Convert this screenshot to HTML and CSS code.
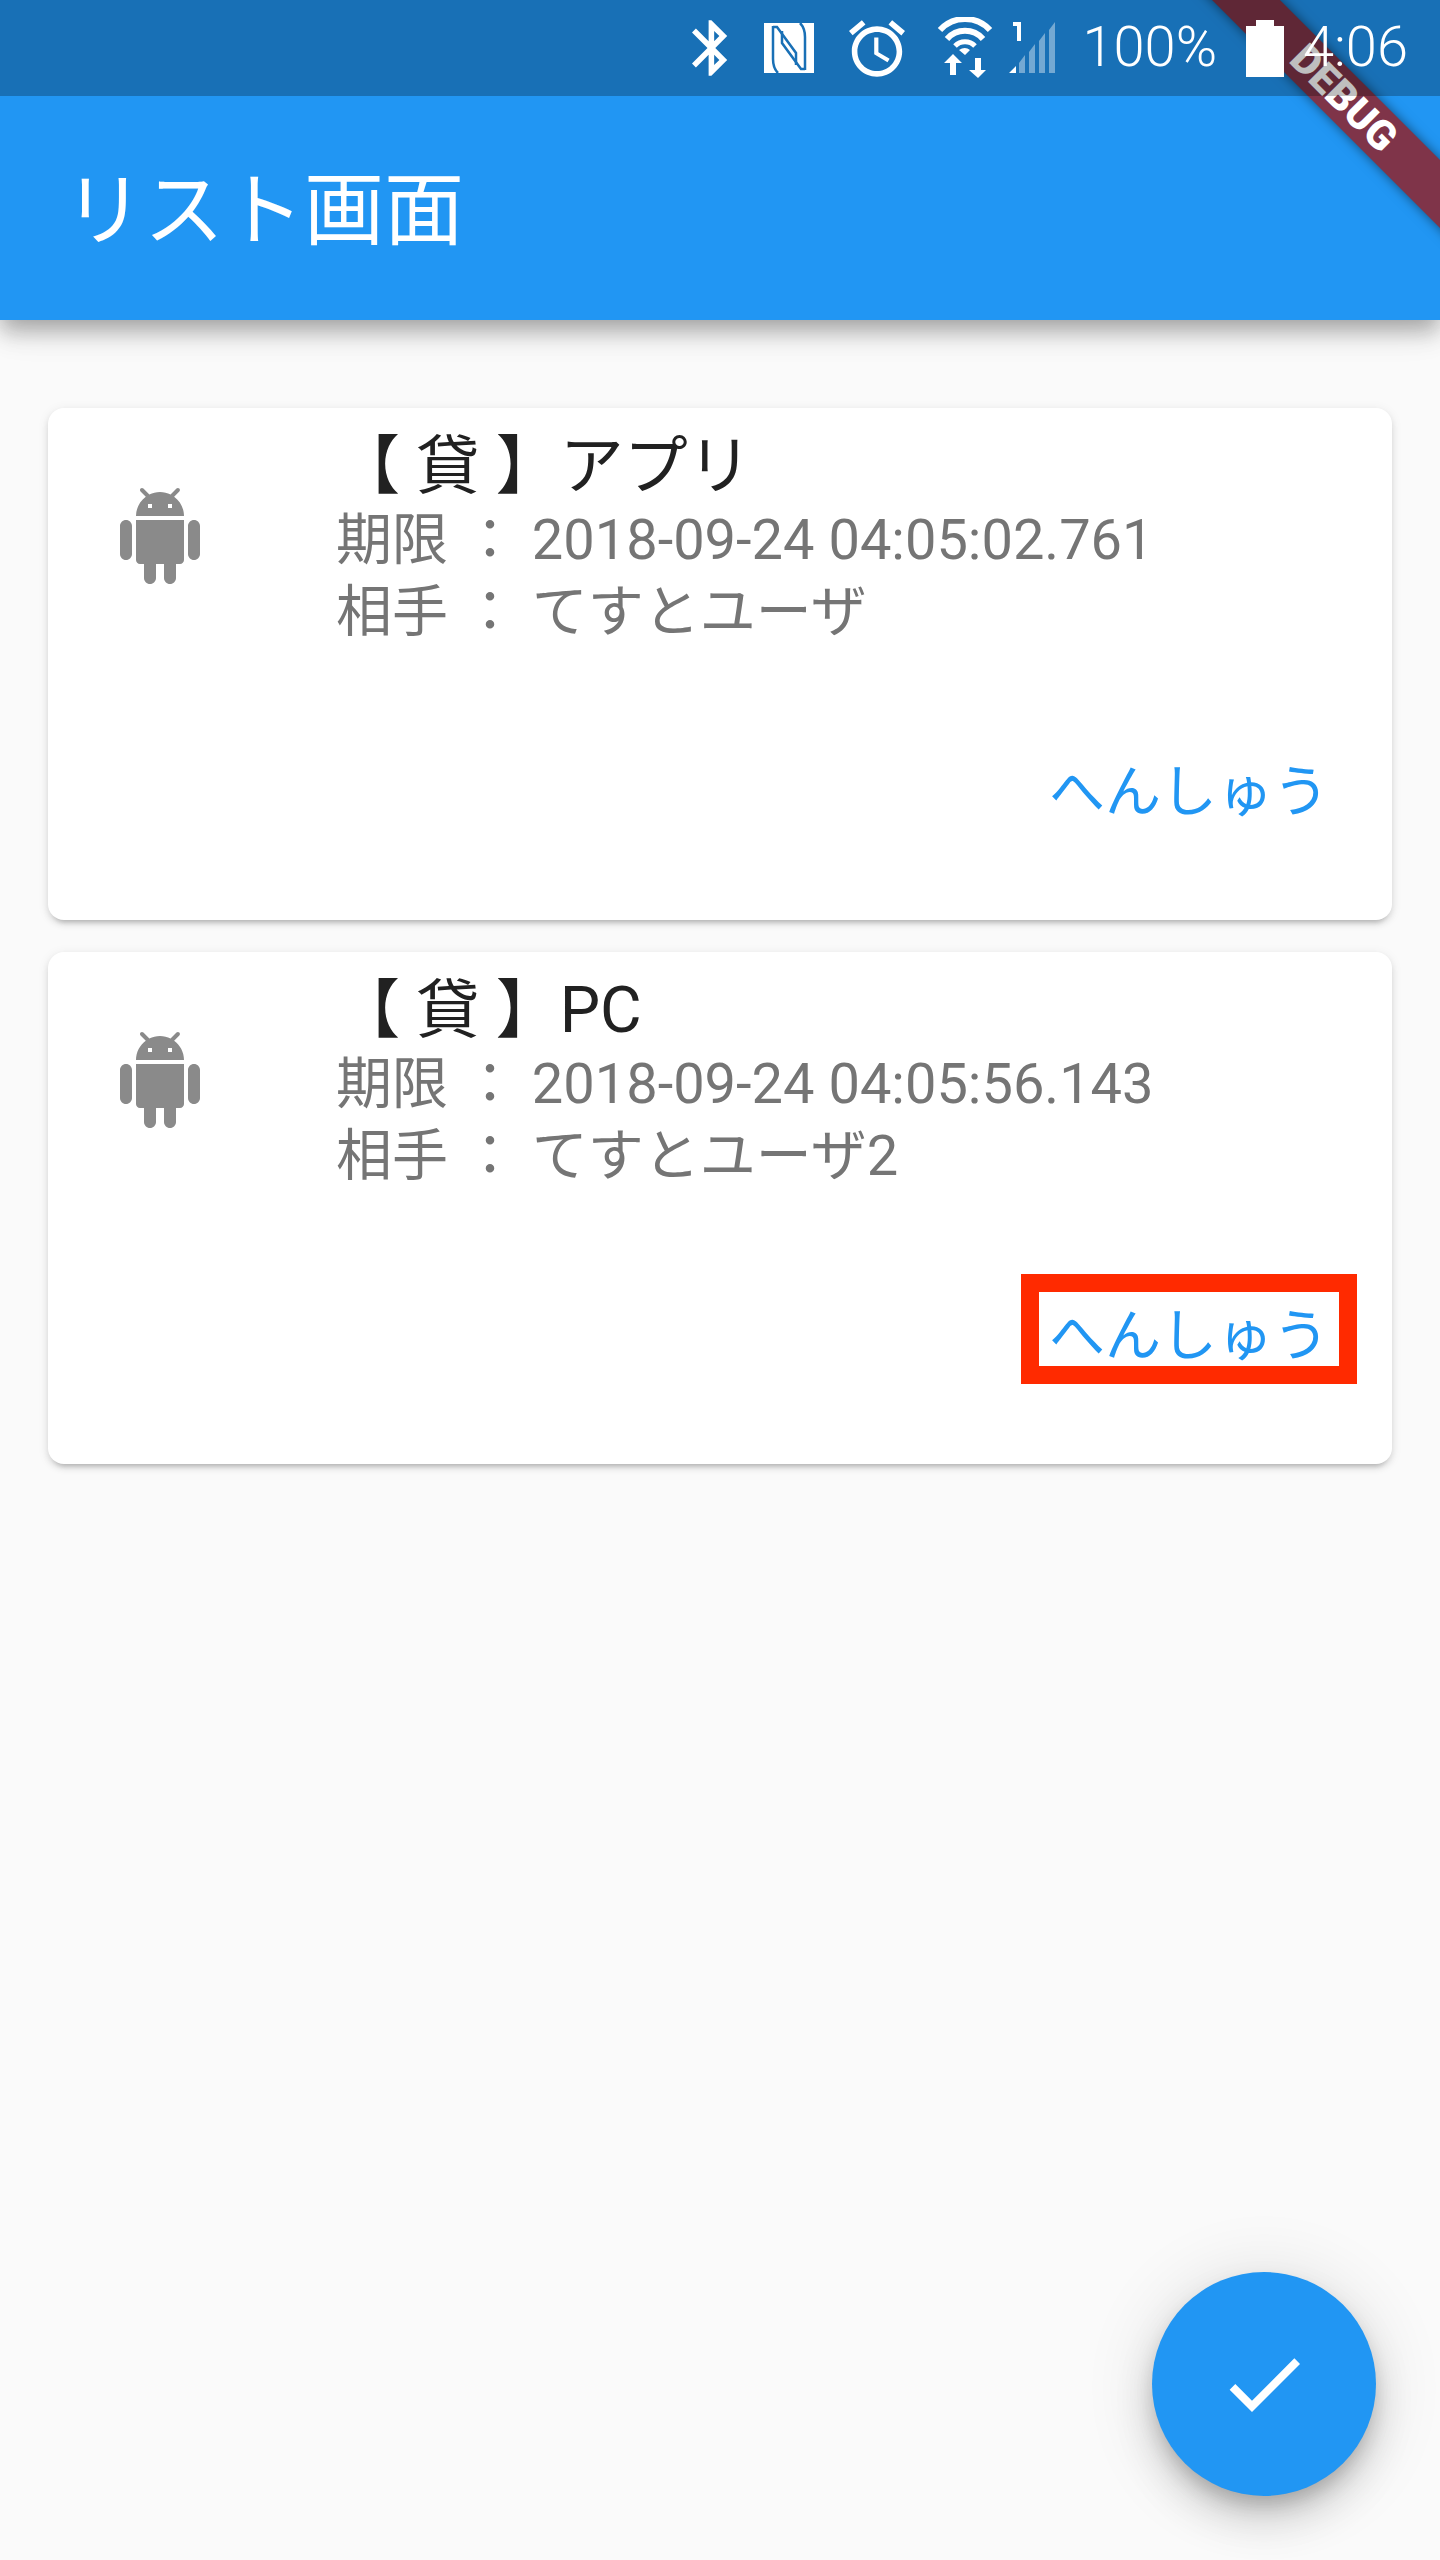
FILE: index.html
```html
<!DOCTYPE html>
<html lang="ja">

<head>
    <meta charset="UTF-8">
    <meta name="viewport" content="width=device-width, initial-scale=1.0">
    <title>リスト画面</title>
    <link rel="stylesheet" href="styles.css">
</head>

<body>
    <div class="pantalla">
        <header class="appbar">
            <h1 class="appbar-titulo">リスト画面</h1>
        </header>

        <div class="banner-debug"><span>DEBUG</span></div>

        <div class="statusbar">
            <svg class="ico-bt" viewBox="5 2 13 20">
                <path fill="#fff" d="M17.71 7.71L12 2h-1v7.59L6.41 5 5 6.41 10.59 12 5 17.59 6.41 19 11 14.41V22h1l5.71-5.71-4.3-4.29 4.3-4.29zM13 5.83l1.88 1.88L13 9.59V5.83zm1.88 10.46L13 18.17v-3.76l1.88 1.88z" />
            </svg>
            <svg class="ico-nfc" viewBox="0 0 50 50">
                <rect width="50" height="50" fill="#fff" />
                <g fill="none" stroke="#1970b6" stroke-width="2.5">
                    <path d="M9 3V36Q9 45 14 50" />
                    <path d="M9 4H13L32 30V42" />
                    <path d="M41 47V14Q41 5 36 0" />
                    <path d="M41 46H37L18 20V8" />
                </g>
            </svg>
            <svg class="ico-alarma" viewBox="2 1.86 20 20.14">
                <path fill="#fff" d="M22 5.72l-4.6-3.86-1.29 1.53 4.6 3.86L22 5.72zM7.88 3.39L6.6 1.86 2 5.71l1.29 1.53 4.59-3.85zM12.5 8H11v6l4.75 2.85.75-1.23-4-2.37V8zM12 4c-4.97 0-9 4.03-9 9s4.02 9 9 9c4.97 0 9-4.03 9-9s-4.03-9-9-9zm0 16c-3.87 0-7-3.13-7-7s3.13-7 7-7 7 3.13 7 7-3.13 7-7 7z" />
            </svg>
            <svg class="ico-wifi" viewBox="0 0 56 62">
                <g fill="none" stroke="#fff">
                    <path stroke-width="6" d="M3 13A34 34 0 0 1 53 13" />
                    <path stroke-width="6" d="M10 22A24 24 0 0 1 46 22" />
                    <path stroke-width="5" d="M18 29A14 14 0 0 1 38 29" />
                </g>
                <path fill="#fff" d="M22 33Q28 29 33 33L28 38zM16 37L25 46H19V58H13V46H7zM38 41H44V53H49L41 61L32 53H38z" />
            </svg>
            <svg class="ico-senal" viewBox="0 0 50 52">
                <path fill="#fff" d="M5 0H13V19H9V4H5zM1 51L8 44V51z" />
                <path fill="#fff" opacity="0.4" d="M11 51V41L17 33V51zM21 51V30L27 22V51zM31 51V19L37 11V51zM41 51V8L47 0V51z" />
            </svg>
            <span class="status-pct">100%</span>
            <svg class="ico-bateria" viewBox="0 0 38 57">
                <path fill="#fff" d="M10 0H28V6H38V57H0V6H10z" />
            </svg>
            <span class="status-hora">4:06</span>
        </div>

        <main class="lista">
            <section class="tarjeta">
                <div class="tarjeta-fila">
                    <svg class="ico-android" viewBox="0 0 24 24">
                        <path d="M6 18c0 .55.45 1 1 1h1v3.5c0 .83.67 1.5 1.5 1.5s1.5-.67 1.5-1.5V19h2v3.5c0 .83.67 1.5 1.5 1.5s1.5-.67 1.5-1.5V19h1c.55 0 1-.45 1-1V8H6v10zM3.5 8C2.67 8 2 8.67 2 9.5v7c0 .83.67 1.5 1.5 1.5S5 17.33 5 16.5v-7C5 8.67 4.33 8 3.5 8zm17 0c-.83 0-1.5.67-1.5 1.5v7c0 .83.67 1.5 1.5 1.5s1.5-.67 1.5-1.5v-7c0-.83-.67-1.5-1.5-1.5zm-4.97-5.84l1.3-1.3c.2-.2.2-.51 0-.71-.2-.2-.51-.2-.71 0l-1.48 1.48C13.85 1.23 12.95 1 12 1c-.96 0-1.86.23-2.66.63L7.85.15c-.2-.2-.51-.2-.71 0-.2.2-.2.51 0 .71l1.31 1.31C6.97 3.26 6 5.01 6 7h12c0-1.99-.97-3.75-2.47-4.84zM10 5H9V4h1v1zm5 0h-1V4h1v1z" />
                    </svg>
                    <div class="tarjeta-texto">
                        <h2>【 貸 】アプリ</h2>
                        <p>期限 ： 2018-09-24 04:05:02.761</p>
                        <p>相手 ： てすとユーザ</p>
                    </div>
                </div>
                <a class="boton">へんしゅう</a>
            </section>

            <section class="tarjeta">
                <div class="tarjeta-fila">
                    <svg class="ico-android" viewBox="0 0 24 24">
                        <path d="M6 18c0 .55.45 1 1 1h1v3.5c0 .83.67 1.5 1.5 1.5s1.5-.67 1.5-1.5V19h2v3.5c0 .83.67 1.5 1.5 1.5s1.5-.67 1.5-1.5V19h1c.55 0 1-.45 1-1V8H6v10zM3.5 8C2.67 8 2 8.67 2 9.5v7c0 .83.67 1.5 1.5 1.5S5 17.33 5 16.5v-7C5 8.67 4.33 8 3.5 8zm17 0c-.83 0-1.5.67-1.5 1.5v7c0 .83.67 1.5 1.5 1.5s1.5-.67 1.5-1.5v-7c0-.83-.67-1.5-1.5-1.5zm-4.97-5.84l1.3-1.3c.2-.2.2-.51 0-.71-.2-.2-.51-.2-.71 0l-1.48 1.48C13.85 1.23 12.95 1 12 1c-.96 0-1.86.23-2.66.63L7.85.15c-.2-.2-.51-.2-.71 0-.2.2-.2.51 0 .71l1.31 1.31C6.97 3.26 6 5.01 6 7h12c0-1.99-.97-3.75-2.47-4.84zM10 5H9V4h1v1zm5 0h-1V4h1v1z" />
                    </svg>
                    <div class="tarjeta-texto">
                        <h2>【 貸 】PC</h2>
                        <p>期限 ： 2018-09-24 04:05:56.143</p>
                        <p>相手 ： てすとユーザ2</p>
                    </div>
                </div>
                <a class="boton boton-marcado">へんしゅう</a>
            </section>
        </main>

        <button class="fab">
            <svg viewBox="0 0 24 24">
                <path fill="#fff" d="M9 16.17L4.83 12l-1.42 1.41L9 19 21 7l-1.41-1.41z" />
            </svg>
        </button>
    </div>
</body>

</html>
```

FILE: styles.css
```css
* {
    box-sizing: border-box;
    margin: 0;
    padding: 0;
    font-family: Roboto, "Noto Sans CJK JP", sans-serif;
}

body {
    background-color: #fafafa;
}

.pantalla {
    position: relative;
    width: 1440px;
    height: 2560px;
    overflow: hidden;
    background-color: #fafafa;
}

/* app bar */
.appbar {
    height: 320px;
    padding: 102px 0 0 64px;
    display: flex;
    align-items: center;
    background-color: #2196f3;
    box-shadow: 0 8px 20px -4px rgba(0, 0, 0, 0.2), 0 16px 20px rgba(0, 0, 0, 0.14), 0 4px 40px rgba(0, 0, 0, 0.12);
}

.appbar-titulo {
    font-size: 80px;
    font-weight: 400;
    line-height: 96px;
    color: #fff;
}

/* status bar, dims what is under it */
.statusbar {
    position: absolute;
    top: 0;
    left: 0;
    width: 100%;
    height: 96px;
    padding-right: 32px;
    display: flex;
    justify-content: flex-end;
    align-items: center;
    background-color: rgba(0, 0, 0, 0.25);
    color: #fff;
}

.ico-bt {
    width: 36px;
    height: 56px;
    margin-right: 36px;
}

.ico-nfc {
    width: 50px;
    height: 50px;
    margin-right: 35px;
}

.ico-alarma {
    width: 56px;
    height: 57px;
    margin-right: 32px;
}

.ico-wifi {
    width: 56px;
    height: 62px;
    margin-right: 15px;
}

.ico-senal {
    width: 50px;
    height: 52px;
    margin-right: 24px;
}

.status-pct,
.status-hora {
    font-size: 56px;
    font-weight: 300;
    line-height: 60px;
    margin-top: -3px;
}

.status-pct {
    margin-right: 29px;
}

.ico-bateria {
    width: 38px;
    height: 57px;
    margin-right: 19px;
}

/* debug ribbon */
.banner-debug {
    position: absolute;
    top: 74px;
    left: 1144px;
    width: 400px;
    height: 48px;
    display: flex;
    justify-content: center;
    align-items: center;
    transform: rotate(45deg);
    background-color: #7f3449;
    box-shadow: 0 0 12px rgba(0, 0, 0, 0.5);
}

.banner-debug span {
    font-size: 41px;
    font-weight: 900;
    line-height: 48px;
    color: #fff;
}

/* list */
.lista {
    padding: 88px 48px 0;
    display: flex;
    flex-direction: column;
    gap: 32px;
}

.tarjeta {
    height: 512px;
    display: flex;
    flex-direction: column;
    border-radius: 16px;
    background-color: #fff;
    box-shadow: 0 8px 4px -6px rgba(0, 0, 0, 0.16), 0 4px 6px rgba(0, 0, 0, 0.1), 0 2px 12px rgba(0, 0, 0, 0.08);
}

.tarjeta-fila {
    height: 340px;
    padding: 21px 0 0 64px;
    display: flex;
    align-items: flex-start;
}

.ico-android {
    width: 96px;
    height: 96px;
    margin-top: 59px;
    margin-right: 128px;
    fill: #8a8a8a;
    flex-shrink: 0;
}

.tarjeta-texto h2 {
    font-size: 64px;
    font-weight: 400;
    line-height: 75px;
    color: #212121;
}

.tarjeta-texto p {
    font-size: 56px;
    line-height: 72px;
    color: #757575;
}

.boton {
    width: 300px;
    height: 74px;
    padding-top: 13px;
    margin-left: auto;
    margin-right: 53px;
    display: flex;
    justify-content: center;
    align-items: center;
    font-size: 56px;
    line-height: 62px;
    color: #2196f3;
}

.boton-marcado {
    outline: 18px solid #ff2a00;
}

/* floating button */
.fab {
    position: absolute;
    right: 64px;
    bottom: 64px;
    width: 224px;
    height: 224px;
    display: flex;
    justify-content: center;
    align-items: center;
    border: none;
    border-radius: 50%;
    background-color: #2196f3;
    box-shadow: 0 12px 20px -4px rgba(0, 0, 0, 0.2), 0 24px 40px rgba(0, 0, 0, 0.14), 0 4px 72px rgba(0, 0, 0, 0.12);
}

.fab svg {
    width: 96px;
    height: 96px;
}
```
